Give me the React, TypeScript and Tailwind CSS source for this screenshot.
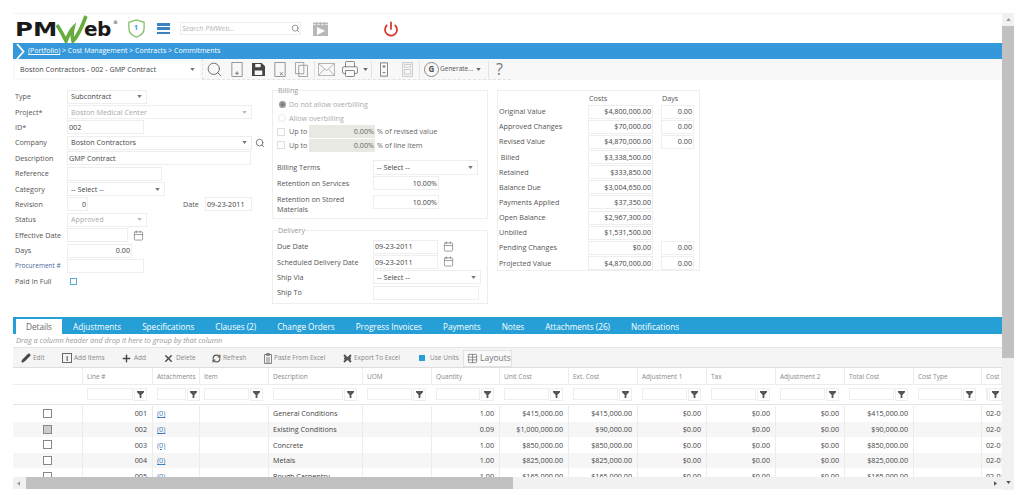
import type { ReactNode } from "react";
import { Calendar, Pencil, Plus, Power, Printer, RefreshCw, Search, Table, X } from "lucide-react";

const gridCols =
  "grid grid-cols-[70px_70px_47px_69px_94px_69px_68px_69px_69px_69px_69px_69px_69px_68px_20px]";

const tabs = [
  "Adjustments",
  "Specifications",
  "Clauses (2)",
  "Change Orders",
  "Progress Invoices",
  "Payments",
  "Notes",
  "Attachments (26)",
  "Notifications",
];

const columns = [
  "Line #",
  "Attachments",
  "Item",
  "Description",
  "UOM",
  "Quantity",
  "Unit Cost",
  "Ext. Cost",
  "Adjustment 1",
  "Tax",
  "Adjustment 2",
  "Total Cost",
  "Cost Type",
  "Cost Code",
];

const lines = [
  ["001", "General Conditions", "1.00", "$415,000.00", "$415,000.00"],
  ["002", "Existing Conditions", "0.09", "$1,000,000.00", "$90,000.00"],
  ["003", "Concrete", "1.00", "$850,000.00", "$850,000.00"],
  ["004", "Metals", "1.00", "$825,000.00", "$825,000.00"],
  ["005", "Rough Carpentry", "1.00", "$165,000.00", "$165,000.00"],
];

const costs: [string, string, string | null][] = [
  ["Original Value", "$4,800,000.00", "0.00"],
  ["Approved Changes", "$70,000.00", "0.00"],
  ["Revised Value", "$4,870,000.00", "0.00"],
  ["\u00a0Billed", "$3,338,500.00", null],
  ["Retained", "$333,850.00", null],
  ["Balance Due", "$3,004,650.00", null],
  ["Payments Applied", "$37,350.00", null],
  ["Open Balance", "$2,967,300.00", null],
  ["Unbilled", "$1,531,500.00", null],
  ["Pending Changes", "$0.00", "0.00"],
  ["Projected Value", "$4,870,000.00", "0.00"],
];

function Caret({ className = "text-[#777]" }: { className?: string }) {
  return (
    <svg viewBox="0 0 6 4" className={`h-[3px] w-[5px] shrink-0 fill-current ${className}`}>
      <path d="M0 0h6L3 4z" />
    </svg>
  );
}

function Box({ className = "", children }: { className?: string; children?: ReactNode }) {
  return (
    <div className={`flex h-[14px] shrink-0 items-center border border-[#eeeeee] bg-white px-[1px] text-[7.200px] whitespace-nowrap ${className}`}>
      {children}
    </div>
  );
}

function Select({ className = "", text, muted }: { className?: string; text: string; muted?: boolean }) {
  return (
    <Box className={`justify-between pl-[3px] pr-[4px] ${className}`}>
      <span className={muted ? "text-[#aaaaaa]" : "text-[#444]"}>{text}</span>
      <Caret className={muted ? "text-[#bbbbbb]" : "text-[#777]"} />
    </Box>
  );
}

function Cal() {
  return <Calendar className="ml-[5px] h-[11px] w-[11px] shrink-0 text-[#777]" strokeWidth={1.5} />;
}

function Field({ label, labelClass = "text-[7.200px] text-[#555]", children }: { label: string; labelClass?: string; children?: ReactNode }) {
  return (
    <div className="flex h-[15.400px] items-center">
      <span className={`w-[52px] shrink-0 whitespace-nowrap ${labelClass}`}>{label}</span>
      {children}
    </div>
  );
}

function DocIcon({ mark }: { mark: string }) {
  return (
    <svg viewBox="0 0 12 16" className="h-[15px] w-[12px] fill-none stroke-[#777]" strokeWidth="0.8">
      <path d="M.5.5h11v15H.5z" />
      {mark === "plus" && <path d="M6 10v4M4 12h4" strokeWidth="1" />}
      {mark === "x" && <path d="M6 11l3 3M9 11l-3 3" strokeWidth="1" />}
    </svg>
  );
}

function Sep() {
  return <div className="h-[17px] w-px shrink-0 bg-[#e4e4e4]" />;
}

function Logo() {
  return (
    <div className="flex items-center pl-[2px] font-['DejaVu_Sans',sans-serif] text-[#1a1a1a]">
      <span className="w-[42px] origin-left scale-x-[1.22] text-[20px] leading-none font-bold">PM</span>
      <svg viewBox="0 0 32 28" className="-ml-[1px] -mr-[4px] h-[28px] w-[32px] fill-none stroke-[#67ad3d]" strokeWidth="3.6">
        <path d="M1 10c3 4 6 10 9 16 2-5 4-10 7-13-1 4-1 9 0 13C23 20 27 9 30 1" />
      </svg>
      <span className="w-[29px] text-[20px] leading-none font-bold tracking-[-0.5px]">eb</span>
      <span className="-mt-[12px] text-[5px] leading-none">®</span>
    </div>
  );
}

function TopBar() {
  return (
    <div className="flex h-[30px] items-center border-t border-[#f5f5f5]">
      <Logo />
      <svg viewBox="0 0 20 20" className="ml-[9px] h-[19px] w-[19px] fill-none stroke-[#86c06a]" strokeWidth="1.4">
        <path d="M10 1l8 2.5V10c0 4.5-3.5 7.5-8 9-4.500-1.500-8-4.500-8-9V3.500z" />
      </svg>
      <span className="-ml-[12px] w-[5px] text-[7px] font-bold text-[#3498db]">1</span>
      <div className="ml-[18px] flex h-[11px] w-[13px] flex-col justify-between">
        <div className="h-[2.500px] bg-[#3b82c4]" />
        <div className="h-[2.500px] bg-[#3b82c4]" />
        <div className="h-[2.500px] bg-[#3b82c4]" />
      </div>
      <div className="ml-[10px] flex h-[13px] w-[121px] items-center justify-between border border-[#eeeeee] pl-[1px]">
        <span className="text-[7.200px] text-[#b5b5b5] italic">Search PMWeb...</span>
        <Search className="h-[9px] w-[9px] text-[#777]" />
      </div>
      <div className="ml-[12px] flex h-[14px] w-[15px] flex-col items-center justify-between bg-[#b8b8b8]">
        <div className="h-[3px] w-full border-y border-dashed border-white/60" />
        <svg viewBox="0 0 6 6" className="mb-[1px] h-[8px] w-[8px] fill-white">
          <path d="M0 0l6 3-6 3z" />
        </svg>
      </div>
      <Power className="ml-[55px] h-[16px] w-[16px] text-[#d5352b]" strokeWidth={2.6} />
    </div>
  );
}

function Breadcrumb() {
  return (
    <div className="flex h-[16px] items-center bg-[#3498db] text-[7px] text-white">
      <svg viewBox="0 0 9 15" className="ml-[3px] h-[15px] w-[9px] fill-none stroke-white" strokeWidth="1.8">
        <path d="M1 0l6.500 7.500L1 15" />
      </svg>
      <span className="ml-[3px] whitespace-pre">
        <span className="underline">(Portfolio)</span> &gt; Cost Management &gt; Contracts &gt; Commitments
      </span>
    </div>
  );
}

function ActionBar() {
  return (
    <div className="flex h-[21px] items-center bg-[#f8f8f8] pl-[2px]">
      <div className="flex h-[17px] w-[185px] items-center justify-between bg-white pl-[5px] pr-[5px] text-[7.200px] text-[#444]">
        <span>Boston Contractors - 002 - GMP Contract</span>
        <Caret />
      </div>
      <div className="ml-[2px] flex h-[21px] w-[309px] items-center border-b border-l border-dashed border-[#e2e2e2] text-[#666]">
        <Search className="ml-[3px] h-[17px] w-[17px] shrink-0" strokeWidth={1.3} />
        <div className="ml-[8px]"><DocIcon mark="plus" /></div>
        <svg viewBox="0 0 12 12" className="ml-[9px] h-[13px] w-[13px] fill-[#444]">
          <path d="M0 0h9l3 3v9H0zM3 1v3h5V1zM2.500 7v4h7V7z" fillRule="evenodd" />
        </svg>
        <div className="ml-[9px]"><DocIcon mark="x" /></div>
        <svg viewBox="0 0 14 16" className="ml-[9px] h-[15px] w-[13px] fill-none stroke-[#888]" strokeWidth="0.8">
          <path d="M.5.5h9v12h-9zM4 3.500h9.500v12H4z" />
        </svg>
        <div className="ml-[6px]"><Sep /></div>
        <svg viewBox="0 0 17 13" className="ml-[3px] h-[13px] w-[17px] fill-none stroke-[#999]" strokeWidth="0.7">
          <path d="M.5.5h16v12H.5zM.5.5l8 7 8-7M.5 12.500l6-6.500M16.500 12.500l-6-6.500" />
        </svg>
        <Printer className="ml-[5px] h-[18px] w-[20px] shrink-0 text-[#666]" strokeWidth={1} />
        <Caret className="ml-[3px] text-[#666]" />
        <div className="ml-[3px]"><Sep /></div>
        <svg viewBox="0 0 9 16" className="ml-[8px] h-[15px] w-[8px] fill-none stroke-[#555]" strokeWidth="0.8">
          <path d="M.5.500h8v15h-8zM4.500 3v3.500M2.800 4.700h3.400M2.800 11.500h3.400" />
        </svg>
        <svg viewBox="0 0 12 16" className="ml-[14px] h-[15px] w-[11px] fill-none stroke-[#c5c5c5]" strokeWidth="1">
          <path d="M.5.500h11v15H.5zM2.500 2.500h7v3h-7zM2.500 8h7v5h-7z" />
        </svg>
        <div className="ml-[6px]"><Sep /></div>
        <div className="ml-[4px] flex h-[15px] w-[15px] shrink-0 items-center justify-center rounded-full border border-[#888] text-[8px] font-bold text-[#555]">
          G
        </div>
        <span className="ml-[1px] w-[32px] text-[6.500px] whitespace-nowrap text-[#555]">Generate...</span>
        <Caret className="ml-[4px]" />
        <div className="ml-[7px]"><Sep /></div>
        <span className="ml-[7px] text-[16px] leading-none text-[#777]">?</span>
      </div>
    </div>
  );
}

function LeftForm() {
  return (
    <div className="flex w-[259px] shrink-0 flex-col pl-[2px] pt-[9px]">
      <Field label="Type"><Select className="w-[80px]" text="Subcontract" /></Field>
      <Field label="Project*"><Select className="w-[185px]" text="Boston Medical Center" muted /></Field>
      <Field label="ID*"><Box className="w-[77px] text-[#444]">002</Box></Field>
      <Field label="Company">
        <Select className="w-[185px]" text="Boston Contractors" />
        <Search className="ml-[3px] h-[10px] w-[10px] text-[#666]" />
      </Field>
      <Field label="Description"><Box className="w-[184px] text-[#444]">GMP Contract</Box></Field>
      <Field label="Reference"><Box className="w-[95px]" /></Field>
      <Field label="Category"><Select className="w-[98px]" text="-- Select --" /></Field>
      <Field label="Revision">
        <Box className="w-[21px] justify-end text-[#444]">0</Box>
        <span className="ml-[95px] w-[22px] text-[7.200px] text-[#555]">Date</span>
        <Box className="w-[47px] border-[#dcdcdc] text-[#444]">09-23-2011</Box>
      </Field>
      <Field label="Status"><Select className="w-[80px]" text="Approved" muted /></Field>
      <Field label="Effective Date"><Box className="w-[61px]" /><Cal /></Field>
      <Field label="Days"><Box className="w-[65px] justify-end text-[#444]">0.00</Box></Field>
      <Field label="Procurement #" labelClass="text-[6.500px] text-[#4a6a9a]"><Box className="w-[77px]" /></Field>
      <Field label="Paid In Full">
        <div className="ml-[3px] h-[7px] w-[7px] border border-[#5aa9dc] bg-white" />
      </Field>
    </div>
  );
}

function Legend({ children }: { children: string }) {
  return <legend className="ml-[1px] text-[7.200px] leading-[10px] text-[#999]">{children}</legend>;
}

function Upto({ suffix }: { suffix: string }) {
  return (
    <div className="flex h-[13.500px] items-center text-[7.200px] whitespace-nowrap text-[#666]">
      <div className="h-[8px] w-[8px] shrink-0 border border-[#dddddd] bg-white" />
      <span className="ml-[4px] w-[20px]">Up to</span>
      <div className="flex h-[13px] w-[66px] items-center justify-end bg-[#e9e9e4] pr-[1px]">0.00%</div>
      <span className="ml-[2px]">{suffix}</span>
    </div>
  );
}

function MiddleForm() {
  return (
    <div className="flex w-[216px] shrink-0 flex-col pt-[5px]">
      <fieldset className="h-[134px] border border-[#eeeeee] px-[4px]">
        <Legend>Billing</Legend>
        <div className="pt-[3px]">
          <div className="flex h-[13.500px] items-center text-[7.200px] text-[#aaaaaa]">
            <div className="ml-[2px] h-[7px] w-[7px] rounded-full border-2 border-[#999] bg-[#777]" />
            <span className="ml-[3px]">Do not allow overbilling</span>
          </div>
          <div className="flex h-[13.500px] items-center text-[7.200px] text-[#aaaaaa]">
            <div className="ml-[1px] h-[8px] w-[8px] rounded-full border border-[#e8e8e8]" />
            <span className="ml-[3px]">Allow overbilling</span>
          </div>
          <Upto suffix="% of revised value" />
          <Upto suffix="% of line item" />
        </div>
        <div className="mt-[8px] flex h-[15px] items-center text-[7.200px] text-[#555]">
          <span className="w-[96px]">Billing Terms</span>
          <Select className="h-[15px] w-[105px]" text="-- Select --" />
        </div>
        <div className="mt-[1px] flex h-[14px] items-center text-[7.200px] text-[#555]">
          <span className="w-[96px]">Retention on Services</span>
          <Box className="w-[66px] justify-end text-[#444]">10.00%</Box>
        </div>
        <div className="mt-[3px] flex h-[22px] items-center text-[7.200px] text-[#555]">
          <span className="w-[96px] pr-[20px] leading-[10px]">Retention on Stored Materials</span>
          <Box className="-mt-[4px] w-[66px] justify-end text-[#444]">10.00%</Box>
        </div>
      </fieldset>
      <fieldset className="mt-[6px] h-[79px] border border-[#eeeeee] px-[4px]">
        <Legend>Delivery</Legend>
        <div className="pt-[4px] text-[7.200px] text-[#555]">
          <div className="flex h-[15.300px] items-center">
            <span className="w-[96px]">Due Date</span>
            <Box className="w-[65px] text-[#444]">09-23-2011</Box>
            <Cal />
          </div>
          <div className="flex h-[15.300px] items-center">
            <span className="w-[96px] whitespace-nowrap">Scheduled Delivery Date</span>
            <Box className="w-[65px] text-[#444]">09-23-2011</Box>
            <Cal />
          </div>
          <div className="flex h-[15.300px] items-center">
            <span className="w-[96px]">Ship Via</span>
            <Select className="w-[108px]" text="-- Select --" />
          </div>
          <div className="flex h-[15.300px] items-center">
            <span className="w-[96px]">Ship To</span>
            <Box className="w-[106px]" />
          </div>
        </div>
      </fieldset>
    </div>
  );
}

function CostPanel() {
  return (
    <div className="ml-[9px] mt-[10px] h-[181px] w-[203px] shrink-0 border border-[#eeeeee] px-[1px] pt-[2px] text-[7.200px] text-[#555]">
      <div className="flex h-[11px] items-center pl-[90px]">
        <span className="w-[73px]">Costs</span>
        <span>Days</span>
      </div>
      {costs.map(([label, cost, days]) => (
        <div key={label} className="flex h-[15.150px] items-center">
          <span className="w-[89px] shrink-0 whitespace-pre">{label}</span>
          <Box className="w-[65px] justify-end text-[#444]">{cost}</Box>
          {days && <Box className="ml-[8px] w-[33px] justify-end text-[#444]">{days}</Box>}
        </div>
      ))}
    </div>
  );
}

function Tabs() {
  return (
    <div className="mt-[2px] flex h-[17px] items-end bg-[#259fd6] pl-[3px] text-[8.200px] text-white">
      <div className="flex h-[15px] w-[46px] items-center justify-center bg-white pt-[1px] text-[#666]">Details</div>
      {tabs.map((tab) => (
        <div key={tab} className="ml-[11px] flex h-[15px] items-center pr-[10px] pt-[1px] whitespace-nowrap">
          {tab}
        </div>
      ))}
    </div>
  );
}

function Tool({ icon, label, className }: { icon: ReactNode; label: string; className: string }) {
  return (
    <div className={`flex items-center whitespace-nowrap ${className}`}>
      {icon}
      <span className="ml-[2px] text-[6.500px] text-[#888]">{label}</span>
    </div>
  );
}

function GridToolbar() {
  return (
    <div className="flex h-[20px] items-center border-b border-[#dddddd] bg-[#f5f5f5] pt-[1px]">
      <Tool className="ml-[8px] w-[41px]" label="Edit" icon={<Pencil className="h-[10px] w-[10px] fill-[#444] text-[#444]" />} />
      <Tool
        className="w-[59px]"
        label="Add Items"
        icon={
          <div className="flex h-[10px] w-[10px] items-center justify-center border border-[#666] text-[7px] leading-none font-bold text-[#555]">
            i
          </div>
        }
      />
      <Tool className="w-[42px]" label="Add" icon={<Plus className="h-[11px] w-[11px] text-[#444]" strokeWidth={3} />} />
      <Tool className="w-[49px]" label="Delete" icon={<X className="h-[11px] w-[11px] text-[#444]" strokeWidth={3} />} />
      <Tool className="w-[52px]" label="Refresh" icon={<RefreshCw className="h-[9px] w-[9px] text-[#555]" strokeWidth={3} />} />
      <Tool
        className="w-[79px]"
        label="Paste From Excel"
        icon={
          <svg viewBox="0 0 8 11" className="h-[11px] w-[8px] fill-none stroke-[#777]" strokeWidth="0.9">
            <path d="M.5 1.500h7v9h-7zM2.500.500h3v2h-3zM2 5h4M2 7h4M2 9h4" />
          </svg>
        }
      />
      <Tool
        className="w-[76px]"
        label="Export To Excel"
        icon={
          <svg viewBox="0 0 9 9" className="h-[9px] w-[9px] fill-none stroke-[#555]" strokeWidth="1.800">
            <path d="M1 1l7 7M8 1L1 8M1 4.500h7" />
          </svg>
        }
      />
      <div className="h-[6px] w-[6px] bg-[#259fd6]" />
      <span className="ml-[5px] w-[33px] text-[6.500px] whitespace-nowrap text-[#888]">Use Units</span>
      <div className="flex h-[17px] w-[49px] items-center border border-[#e2e2e2] bg-[#fafafa] pl-[3px]">
        <Table className="h-[11px] w-[11px] text-[#666]" strokeWidth={1.5} />
        <span className="ml-[2px] text-[8.500px] text-[#777]">Layouts</span>
      </div>
    </div>
  );
}

function GridHead() {
  return (
    <>
      <div className={`${gridCols} h-[17px] border-b border-[#ececec] text-[6.500px] text-[#888]`}>
        <div className="border-r border-[#ececec]" />
        {columns.map((col) => (
          <div key={col} className="flex items-center overflow-hidden border-r border-[#ececec] pl-[4px] pt-[2px] whitespace-nowrap">
            {col}
          </div>
        ))}
      </div>
      <div className={`${gridCols} h-[20px] border-b border-[#e4e4e4] pb-[1px]`}>
        <div />
        {columns.map((col) => (
          <div key={col} className="flex items-center overflow-hidden pl-[4px]">
            <div className="h-[12px] min-w-0 flex-1 border border-[#eeeeee]" />
            <div className={`ml-[1px] flex h-[13px] w-[13px] shrink-0 items-center justify-center border border-[#eeeeee] ${col === "Attachments" ? "mr-0" : "mr-[6px]"}`}>
              <svg viewBox="0 0 8 8" className="h-[7px] w-[7px] fill-[#555]">
                <path d="M0 0h8v1.500L5 4.500V8H3V4.500L0 1.500z" />
              </svg>
            </div>
          </div>
        ))}
      </div>
    </>
  );
}

function GridBody() {
  return (
    <div className="h-[72px] overflow-hidden pt-[1px] text-[7.200px] text-[#444]">
      {lines.map(([no, desc, qty, unit, ext], i) => (
        <div key={no} className={`${gridCols} h-[15.600px] ${i % 2 === 1 ? "bg-[#f6f6f6]" : "bg-white"}`}>
          <div className="flex items-center justify-center border-r border-[#ececec]">
            <div className={`h-[9px] w-[9px] border border-[#888] ${i === 1 ? "bg-[#cccccc]" : "bg-white"}`} />
          </div>
          <div className="flex items-center justify-end border-r border-[#ececec] pr-[5px]">{no}</div>
          <div className="flex items-center border-r border-[#ececec] pl-[4px] text-[#3a7fc1] underline">(0)</div>
          <div className="border-r border-[#ececec]" />
          <div className="flex items-center border-r border-[#ececec] pl-[4px]">{desc}</div>
          <div className="border-r border-[#ececec]" />
          {[qty, unit, ext, "$0.00", "$0.00", "$0.00", ext].map((v, j) => (
            <div key={j} className="flex items-center justify-end border-r border-[#ececec] pr-[5px]">
              {v}
            </div>
          ))}
          <div className="border-r border-[#ececec]" />
          <div className="flex items-center overflow-hidden pl-[4px] whitespace-nowrap">02-01000</div>
        </div>
      ))}
    </div>
  );
}

function HScroll() {
  return (
    <div className="flex h-[12px] items-center bg-[#f1f1f1]">
      <svg viewBox="0 0 4 6" className="ml-[4px] h-[5px] w-[3px] fill-[#999]">
        <path d="M4 0v6L0 3z" />
      </svg>
      <div className="ml-[6px] h-full w-[487px] bg-[#c1c1c1]" />
      <svg viewBox="0 0 4 6" className="ml-[481px] h-[5px] w-[3px] fill-[#555]">
        <path d="M0 0v6l4-3z" />
      </svg>
    </div>
  );
}

function VScroll() {
  return (
    <div className="flex h-[477px] w-[12px] flex-col bg-[#f1f1f1]">
      <div className="flex h-[13px] items-center justify-center">
        <svg viewBox="0 0 6 4" className="h-[3px] w-[5px] fill-[#999]">
          <path d="M0 4h6L3 0z" />
        </svg>
      </div>
      <div className="h-[332px] bg-[#c1c1c1]" />
      <div className="flex flex-1 items-end justify-center pb-[6px]">
        <Caret className="text-[#555]" />
      </div>
    </div>
  );
}

export default function App() {
  return (
    <div className="h-[495px] w-[1024px] overflow-hidden bg-white pl-[13px] pt-[13px] font-['Open_Sans',sans-serif]">
      <div className="flex">
        <div className="w-[989px] shrink-0">
          <TopBar />
          <Breadcrumb />
          <ActionBar />
          <div className="flex h-[235px]">
            <LeftForm />
            <MiddleForm />
            <CostPanel />
          </div>
          <Tabs />
          <div className="flex h-[14px] items-center border-b border-[#e4e4e4] pl-[3px] text-[7.300px] text-[#999] italic">
            Drag a column header and drop it here to group by that column
          </div>
          <GridToolbar />
          <GridHead />
          <GridBody />
          <HScroll />
        </div>
        <VScroll />
      </div>
    </div>
  );
}
